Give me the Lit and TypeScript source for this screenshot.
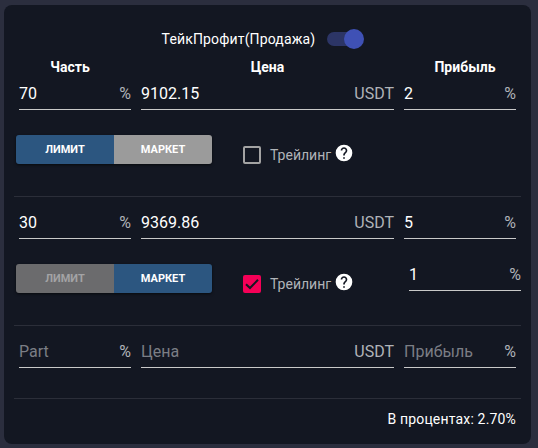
import { LitElement, html, css } from "lit";
import { customElement } from "lit/decorators.js";

@customElement("app-root")
export class AppRoot extends LitElement {
  static styles = css`
    :host { display: block; width: 538px; height: 448px; box-sizing: border-box; padding: 5px 7px 4px 4px; background: #2b2e3e; font-family: Roboto, "Liberation Sans", sans-serif; color: #fff; overflow: hidden; }
    .card { height: 439px; box-sizing: border-box; background: #131722; border-radius: 8px; padding: 0 10px; display: flex; flex-direction: column; }
    .top { height: 28px; margin-top: 20px; display: flex; justify-content: center; align-items: center; gap: 12px; font-size: 14px; letter-spacing: .15px; padding-right: 12px; }
    .switch { position: relative; width: 34px; height: 14px; border-radius: 7px; background: #2c3566; }
    .knob { position: absolute; right: -3px; top: -3px; width: 20px; height: 20px; border-radius: 50%; background: #3f51b5; }
    .heads { display: grid; grid-template-columns: 112px 253px 112px; column-gap: 10px; padding: 0 5px; height: 20px; margin-top: 4px; align-items: center; font-size: 14px; font-weight: 700; text-align: center; }
    .heads .left { padding-right: 10px; }
    .heads .right { padding-left: 10px; }
    .inputs { display: grid; grid-template-columns: 112px 253px 112px; column-gap: 10px; padding: 0 5px; }
    .field { height: 33px; box-sizing: border-box; border-bottom: 1px solid #c9c9c9; display: flex; justify-content: space-between; align-items: center; font-size: 16px; }
    .ph { color: #7b7e85; }
    .unit { color: #b0b3b8; }
    .opts { display: flex; align-items: flex-start; padding-left: 2px; margin-top: 25px; height: 29px; }
    .group { display: flex; width: 196px; height: 29px; border-radius: 3px; overflow: hidden; box-shadow: 0 1px 3px rgba(0,0,0,.6); font-size: 11px; font-weight: 700; flex: none; }
    .group span { flex: 1; display: flex; align-items: center; justify-content: center; }
    .on { background: #2c5680; color: #fff; }
    .off1 { background: #9b9b9b; color: #fff; }
    .off2 { background: #6b6b6d; color: #a3a3a5; }
    .trail { display: flex; align-items: center; margin-left: 31px; margin-top: 11px; height: 18px; font-size: 14px; color: #b0b3b8; }
    .box { width: 18px; height: 18px; box-sizing: border-box; border: 2px solid #a3a3a3; border-radius: 2px; margin-right: 9px; flex: none; }
    .box.checked { border: 0; background: #f50057; display: flex; align-items: center; justify-content: center; }
    .help { margin-left: 3px; margin-top: -5px; display: block; flex: none; }
    .rule { height: 1px; background: #2b2e39; flex: none; margin-top: 32px; }
    .spacer { height: 9px; flex: none; }
    .mini { width: 112px; margin-left: auto; margin-top: -6px; }
    .rule.last { margin-top: 30px; }
    .foot { text-align: right; padding-right: 5px; font-size: 14px; letter-spacing: .17px; margin-top: 12px; line-height: 16px; }
  `;

  private help() {
    return html`<svg class="help" width="20" height="20" viewBox="0 0 24 24"><path fill="#fff" d="M12 2a10 10 0 1 0 0 20 10 10 0 0 0 0-20zm1 17h-2v-2h2v2zm2.07-7.75l-.9.92C13.45 12.9 13 13.5 13 15h-2v-.5c0-1.1.45-2.1 1.17-2.83l1.24-1.26c.37-.36.59-.86.59-1.41 0-1.1-.9-2-2-2s-2 .9-2 2H8c0-2.21 1.79-4 4-4s4 1.79 4 4c0 .88-.36 1.68-.93 2.25z"/></svg>`;
  }

  private row(a: string, b: string, c: string, ph = false) {
    const cls = ph ? "ph" : "";
    return html`<div class="inputs">
      <div class="field"><span class=${cls}>${a}</span><span class="unit">%</span></div>
      <div class="field"><span class=${cls}>${b}</span><span class="unit">USDT</span></div>
      <div class="field"><span class=${cls}>${c}</span><span class="unit">%</span></div>
    </div>`;
  }

  render() {
    return html`<div class="card">
      <div class="top"><span>ТейкПрофит(Продажа)</span><div class="switch"><div class="knob"></div></div></div>
      <div class="heads"><span class="left">Часть</span><span>Цена</span><span class="right">Прибыль</span></div>
      ${this.row("70", "9102.15", "2")}
      <div class="opts">
        <div class="group"><span class="on">ЛИМИТ</span><span class="off1">МАРКЕТ</span></div>
        <div class="trail"><div class="box"></div><span>Трейлинг</span>${this.help()}</div>
      </div>
      <div class="rule"></div>
      <div class="spacer"></div>
      ${this.row("30", "9369.86", "5")}
      <div class="opts">
        <div class="group"><span class="off2">ЛИМИТ</span><span class="on">МАРКЕТ</span></div>
        <div class="trail"><div class="box checked"><svg width="16" height="16" viewBox="0 0 16 16"><path d="M2 8.2 6 12 14 3.8" fill="none" stroke="#131722" stroke-width="2"/></svg></div><span>Трейлинг</span>${this.help()}</div>
        <div class="field mini"><span>1</span><span class="unit">%</span></div>
      </div>
      <div class="rule"></div>
      <div class="spacer"></div>
      ${this.row("Part", "Цена", "Прибыль", true)}
      <div class="rule last"></div>
      <div class="foot">В процентах: 2.70%</div>
    </div>`;
  }
}
